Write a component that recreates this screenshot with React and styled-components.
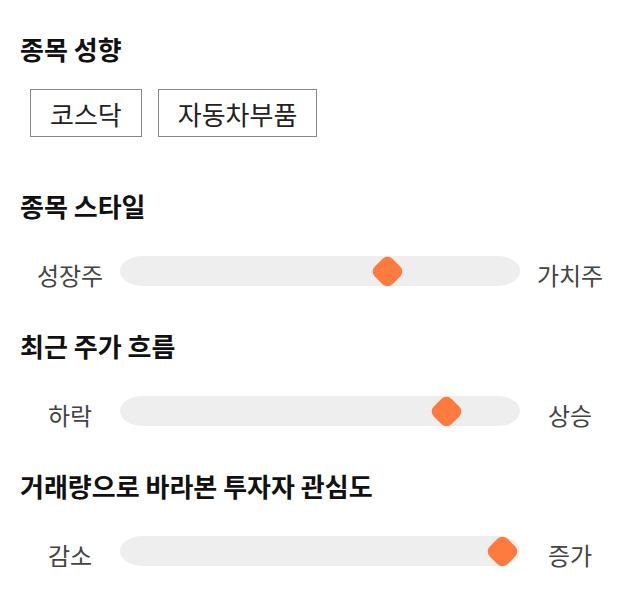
import styled, { createGlobalStyle } from "styled-components";

const Global = createGlobalStyle`
body{
    margin:0;
    background:#fff;
    font-family: "Noto Sans CJK KR", "Noto Sans", sans-serif;
}
`

const Page = styled.div`
width:640px;
padding:34px 20px 0 20px;
box-sizing:border-box;
`

const Title = styled.h2`
margin:0;
font-size:26px;
line-height:30px;
font-weight:bold;
color:#111;
`

const Tags = styled.div`
display:flex;
gap:16px;
margin:25px 0 0 10px;
`

const Tag = styled.div`
display:flex;
align-items:center;
justify-content:center;
height:48px;
padding:0 19px;
box-sizing:border-box;
border:1px solid #888;
font-size:26px;
color:#222;
`

const Section = styled.div`
margin-top:${p => p.top}px;
`

const Row = styled.div`
display:grid;
grid-template-columns:100px 400px 100px;
align-items:start;
margin-top:35px;
`

const Side = styled.span`
text-align:center;
font-size:24px;
line-height:30px;
color:#444;
padding-top:4px;
`

const Track = styled.div`
position:relative;
height:30px;
background:#eeeeee;
border-radius:22px / 15px;
`

const Thumb = styled.div`
position:absolute;
top:2.5px;
width:25px;
height:25px;
margin-left:-12.5px;
background:#ff7a3f;
border-radius:7px;
transform:rotate(45deg);
`

const Slider = ({ left, right, pos }) => (
    <Row>
        <Side>{left}</Side>
        <Track>
            <Thumb style={{ left: pos + "px" }} />
        </Track>
        <Side>{right}</Side>
    </Row>
)

const App = () => {
    return (
        <Page>
            <Global />
            <Title>종목 성향</Title>
            <Tags>
                <Tag>코스닥</Tag>
                <Tag>자동차부품</Tag>
            </Tags>
            <Section top={54}>
                <Title>종목 스타일</Title>
                <Slider left="성장주" right="가치주" pos={267} />
            </Section>
            <Section top={41}>
                <Title>최근 주가 흐름</Title>
                <Slider left="하락" right="상승" pos={326} />
            </Section>
            <Section top={41}>
                <Title>거래량으로 바라본 투자자 관심도</Title>
                <Slider left="감소" right="증가" pos={382} />
            </Section>
        </Page>
    )
}

export default App;
